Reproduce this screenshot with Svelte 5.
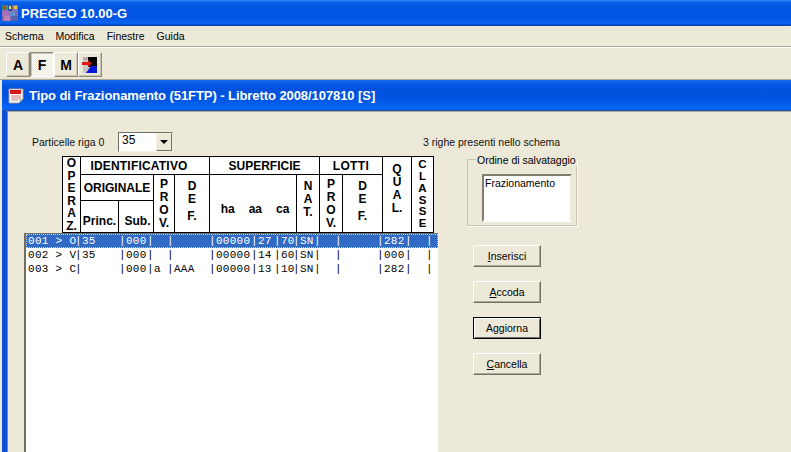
<script lang="ts">
  const menus = ['Schema', 'Modifica', 'Finestre', 'Guida'];
  const stops = [28, 75, 119, 147, 154, 167, 209, 251, 274, 293, 314, 335, 377, 405, 426];
  const template = stops.map((x, i) => `${(stops[i + 1] ?? 437) - x}px`).join(' ');

  const rows = [
    ['001 > O', '|35', '|000', '|', '', '|', '|00000', '|27', '|70', '|SN', '|', '|', '|282', '|', '|'],
    ['002 > V', '|35', '|000', '|', '', '|', '|00000', '|14', '|60', '|SN', '|', '|', '|000', '|', '|'],
    ['003 > C', '|', '|000', '|', 'a', '|AAA', '|00000', '|13', '|10', '|SN', '|', '|', '|282', '|', '|']
  ];
  const buttons = [
    { key: 'I', rest: 'nserisci' },
    { key: 'A', rest: 'ccoda' },
    { key: '', rest: 'Aggiorna', isDefault: true },
    { key: 'C', rest: 'ancella' }
  ];
</script>

{#snippet stacked(text: string)}
  {#each text.split('|') as letter}
    <span>{letter}</span>
  {/each}
{/snippet}

<div class="app">
  <header class="titlebar">
    <svg class="app-icon" width="16" height="16" viewBox="0 0 16 16" aria-hidden="true">
      <rect width="16" height="16" fill="#7f6fb0" />
      <rect x="0" y="0" width="5" height="5" fill="#3a8a6a" />
      <rect x="1" y="1" width="2" height="3" fill="#d83030" />
      <rect x="6" y="0" width="4" height="6" fill="#2c50a8" />
      <rect x="7" y="1" width="2" height="3" fill="#e8e040" />
      <rect x="11" y="0" width="5" height="6" fill="#8870c0" />
      <rect x="12" y="1" width="3" height="3" fill="#e8c840" />
      <rect x="0" y="6" width="7" height="5" fill="#a86fb8" />
      <rect x="7" y="7" width="6" height="4" fill="#5f8fd0" />
      <rect x="2" y="11" width="6" height="5" fill="#c080b0" />
      <rect x="9" y="11" width="7" height="5" fill="#5860b0" />
    </svg>
    <span>PREGEO 10.00-G</span>
  </header>

  <nav class="menubar">
    {#each menus as item}
      <span>{item}</span>
    {/each}
  </nav>

  <div class="toolbar">
    <button class="tool">A</button>
    <button class="tool pressed">F</button>
    <button class="tool">M</button>
    <button class="tool" aria-label="Esci">
      <svg width="16" height="18" viewBox="0 0 16 18" aria-hidden="true">
        <rect x="1" y="1" width="7" height="16" fill="#c8c8c0" />
        <rect x="1" y="1" width="14" height="3" fill="#b8b0a8" />
        <polygon points="6,1 15,1 15,11 6,11" fill="#000" />
        <polygon points="4,17 15,17 15,10 9,10" fill="#0818d8" />
        <path d="M0 6h6V4l4 3.5-4 3.5V9H0z" fill="#e01818" />
      </svg>
    </button>
  </div>

  <div class="mdi">
    <section class="window">
      <header class="window-title">
        <svg width="16" height="16" viewBox="0 0 16 16" aria-hidden="true">
          <path d="M1 1h14v10l-4 4H1z" fill="#fff" stroke="#a09890" />
          <rect x="2" y="2" width="11" height="4" fill="#d81818" />
          <path d="M3 8h10M3 10h10M3 12h7" stroke="#c87878" />
          <path d="M15 11l-4 4v-4z" fill="#c8c0b8" />
        </svg>
        <span>Tipo di Frazionamento (51FTP) - Libretto 2008/107810 [S]</span>
      </header>

      <div class="client">
        <div class="left">
          <div class="count-row">
            <label for="righe">Particelle riga 0</label>
            <div class="combo" id="righe">
              <span>35</span>
              <span class="combo-btn"><i></i></span>
            </div>
          </div>

          <div class="grid-head">
            <div class="cell stack operaz">{@render stacked('O|P|E|R|A|Z.')}</div>
            <div class="cell group identificativo">IDENTIFICATIVO</div>
            <div class="cell group originale">ORIGINALE</div>
            <div class="cell stack prov">{@render stacked('P|R|O|V.')}</div>
            <div class="cell stack def">{@render stacked('D|E|F.')}</div>
            <div class="cell sub-label princ">Princ.</div>
            <div class="cell sub-label sub">Sub.</div>
            <div class="cell group superficie">SUPERFICIE</div>
            <div class="cell units"><span>ha</span><span>aa</span><span>ca</span></div>
            <div class="cell stack nat">{@render stacked('N|A|T.')}</div>
            <div class="cell group lotti">LOTTI</div>
            <div class="cell stack lprov">{@render stacked('P|R|O|V.')}</div>
            <div class="cell stack def ldef">{@render stacked('D|E|F.')}</div>
            <div class="cell stack qual">{@render stacked('Q|U|A|L.')}</div>
            <div class="cell stack classe">{@render stacked('C|L|A|S|S|E')}</div>
          </div>

          <div class="list">
            {#each rows as row, i}
              <div class="row" class:selected={i === 0} style="grid-template-columns: {template}">
                {#each row as field}
                  <span>{field}</span>
                {/each}
              </div>
            {/each}
          </div>
        </div>

        <aside class="right">
          <p class="present">3 righe presenti nello schema</p>
          <div class="group-box">
            <span class="legend">Ordine di salvataggio</span>
            <div class="order-list">Frazionamento</div>
          </div>
          <div class="actions">
            {#each buttons as b}
              <button class="action" class:default={b.isDefault}>
                {#if b.key}<u>{b.key}</u>{/if}{b.rest}
              </button>
            {/each}
          </div>
        </aside>
      </div>
    </section>
  </div>
</div>

<style>
  :global(body) {
    margin: 0;
    overflow: hidden;
  }

  .app {
    width: 791px;
    height: 452px;
    overflow: hidden;
    display: flex;
    flex-direction: column;
    background: #ece9d8;
    font-family: "Liberation Sans", Arial, sans-serif;
    font-size: 10.5px;
    color: #000;
  }

  .titlebar {
    height: 26px;
    flex: none;
    display: flex;
    align-items: center;
    gap: 3px;
    padding-left: 2px;
    box-sizing: border-box;
    color: #fff;
    font-weight: bold;
    font-size: 13px;
    background: linear-gradient(#3a8cf5 0, #0a62e8 2px, #0054e0 8px, #0055e5 18px, #0a66f0 23px, #0046c8 25px, #003cb0 26px);
  }

  .menubar {
    height: 20px;
    flex: none;
    display: flex;
    gap: 12px;
    align-items: center;
    padding-left: 5px;
    border-bottom: 1px solid #aca899;
    box-shadow: 0 1px 0 #fff;
  }

  .toolbar {
    height: 31px;
    flex: none;
    display: flex;
    align-items: flex-start;
    padding: 4px 0 0 6px;
    box-sizing: border-box;
    margin-top: 1px;
  }

  .tool {
    width: 24px;
    height: 25px;
    padding: 0;
    display: flex;
    align-items: center;
    justify-content: center;
    font: bold 14px "Liberation Sans", sans-serif;
    color: #000;
    background: #ece9d8;
    border: 1px solid;
    border-color: #fff #8f8b78 #8f8b78 #fff;
    box-shadow: inset -1px -1px 0 #c9c5b2;
  }

  .tool.pressed {
    border-color: #8f8b78 #fff #fff #8f8b78;
    box-shadow: inset 1px 1px 0 #c9c5b2;
    background: repeating-conic-gradient(#fff 0 25%, #ece9d8 0 50%) 0 0 / 2px 2px;
  }

  .mdi {
    flex: 1;
    min-height: 0;
    padding-left: 2px;
    border-top: 1px solid #aca899;
  }

  .window {
    height: 100%;
    display: flex;
    flex-direction: column;
    background: #0a50d8;
    padding-left: 5px;
  }

  .window-title {
    height: 31px;
    flex: none;
    margin-left: -5px;
    display: flex;
    align-items: center;
    gap: 5px;
    padding-left: 6px;
    box-sizing: border-box;
    color: #fff;
    font-weight: bold;
    font-size: 13px;
    letter-spacing: -0.07px;
    background: linear-gradient(#1a68e8 0, #0a5ce8 3px, #0050dc 8px, #0056e4 20px, #0a66f5 28px, #0860f0 30px, #444c68 31px);
  }

  .client {
    flex: 1;
    min-height: 0;
    display: flex;
    background: #ece9d8;
    border-left: 1px solid #8f8b78;
    border-top: 1px solid #aca899;
  }

  .left {
    width: 414px;
    flex: none;
    margin-left: 16px;
    display: flex;
    flex-direction: column;
  }

  .count-row {
    display: flex;
    align-items: center;
    gap: 8px;
    margin: 19px 0 0 8px;
    height: 21px;
  }

  label {
    width: 78px;
    white-space: nowrap;
    color: #111;
  }

  .combo {
    width: 55px;
    height: 20px;
    box-sizing: border-box;
    background: #fff;
    border: 1px solid;
    border-color: #716f64 #f1efe2 #f1efe2 #716f64;
    display: flex;
    justify-content: space-between;
    padding-left: 3px;
    line-height: 15px;
    font-size: 12px;
  }

  .combo-btn {
    width: 16px;
    background: #ece9d8;
    border: 1px solid;
    border-color: #f1efe2 #716f64 #716f64 #f1efe2;
    box-sizing: border-box;
    display: flex;
    align-items: center;
    justify-content: center;
  }

  .combo-btn i {
    border: 4px solid transparent;
    border-top-color: #000;
    border-bottom: 0;
  }

  .grid-head {
    margin: 4px 0 0 38px;
    width: 372px;
    box-sizing: border-box;
    display: grid;
    grid-template-columns: 18px 38px 35px 21px 35px 87px 23px 23px 40px 29px 22px;
    grid-template-rows: 18px 26px 32px;
    flex: none;
    background: #fff;
    border-left: 1px solid #000;
    border-top: 1px solid #000;
    font: bold 12px "Liberation Sans", sans-serif;
  }

  .cell {
    box-sizing: border-box;
    border-right: 1px solid #000;
    border-bottom: 1px solid #000;
    display: flex;
    align-items: center;
    justify-content: center;
    white-space: nowrap;
  }

  .stack {
    flex-direction: column;
    line-height: 13px;
    font-size: 12px;
  }

  .stack span {
    display: block;
  }

  .operaz { grid-area: 1 / 1 / 4 / 2; line-height: 12.5px; }
  .identificativo { grid-area: 1 / 2 / 2 / 6; padding-right: 12px; letter-spacing: 0.2px; }
  .originale { grid-area: 2 / 2 / 3 / 4; }
  .prov { grid-area: 2 / 4 / 4 / 5; }
  .def { grid-area: 2 / 5 / 4 / 6; padding-bottom: 4px; }
  .def span:last-child { margin-top: 4px; }
  .princ { grid-area: 3 / 2 / 4 / 3; }
  .sub { grid-area: 3 / 3 / 4 / 4; padding-left: 3px; }
  .superficie { grid-area: 1 / 6 / 2 / 8; }
  .units { grid-area: 2 / 6 / 4 / 7; gap: 14px; padding: 11px 0 0 4px; }
  .nat { grid-area: 2 / 7 / 4 / 8; padding-bottom: 8px; }
  .lotti { grid-area: 1 / 8 / 2 / 10; letter-spacing: 0.4px; }
  .lprov { grid-area: 2 / 8 / 4 / 9; }
  .ldef { grid-area: 2 / 9 / 4 / 10; }
  .qual { grid-area: 1 / 10 / 4 / 11; padding-bottom: 12px; }
  .classe { grid-area: 1 / 11 / 4 / 12; font-size: 11.5px; line-height: 11.8px; }

  .sub-label {
    align-items: flex-end;
    padding-bottom: 4px;
  }

  .list {
    flex: 1;
    background: #fff;
    border-style: solid;
    border-color: #716f64;
    border-width: 1px 0 0 2px;
    font: 11px "Liberation Mono", monospace;
    letter-spacing: 0.3px;
  }

  .row {
    height: 14px;
    line-height: 14px;
    display: grid;
    padding-left: 2px;
    white-space: pre;
  }

  .row.selected {
    background: #316ac5;
    color: #fff;
    outline: 1px dotted #d8d4c4;
    outline-offset: -1px;
  }

  .right {
    margin-left: 35px;
    width: 130px;
    display: flex;
    flex-direction: column;
  }

  .present {
    margin: 24px 0 0 -50px;
    white-space: nowrap;
    line-height: 13px;
    color: #111;
  }

  .group-box {
    position: relative;
    width: 110px;
    height: 67px;
    margin: 10px 0 0 -6px;
    box-sizing: border-box;
    border: 1px solid #c9c5b2;
    box-shadow: 1px 1px 0 #fff;
    padding: 14px 0 0 14px;
  }

  .legend {
    position: absolute;
    top: -6px;
    left: 8px;
    padding: 0 1px;
    white-space: nowrap;
    background: #ece9d8;
    line-height: 12px;
  }

  .order-list {
    width: 90px;
    height: 48px;
    box-sizing: border-box;
    background: #fff;
    border: 2px solid;
    border-color: #807d70 #ece9d8 #fff #807d70;
    padding: 1px;
    line-height: 13px;
  }

  .actions {
    display: flex;
    flex-direction: column;
    gap: 14px;
    margin-top: 19px;
  }

  .action {
    width: 68px;
    height: 22px;
    padding: 0;
    font: 10.5px "Liberation Sans", sans-serif;
    color: #000;
    background: #ece9d8;
    border: 1px solid;
    border-color: #fff #716f64 #716f64 #fff;
    box-shadow: inset -1px -1px 0 #aca899;
  }

  .action.default {
    outline: 1px solid #000;
    outline-offset: -1px;
    border-color: #000;
    box-shadow: inset 1px 1px 0 #fff, inset -1px -1px 0 #716f64;
  }
</style>
